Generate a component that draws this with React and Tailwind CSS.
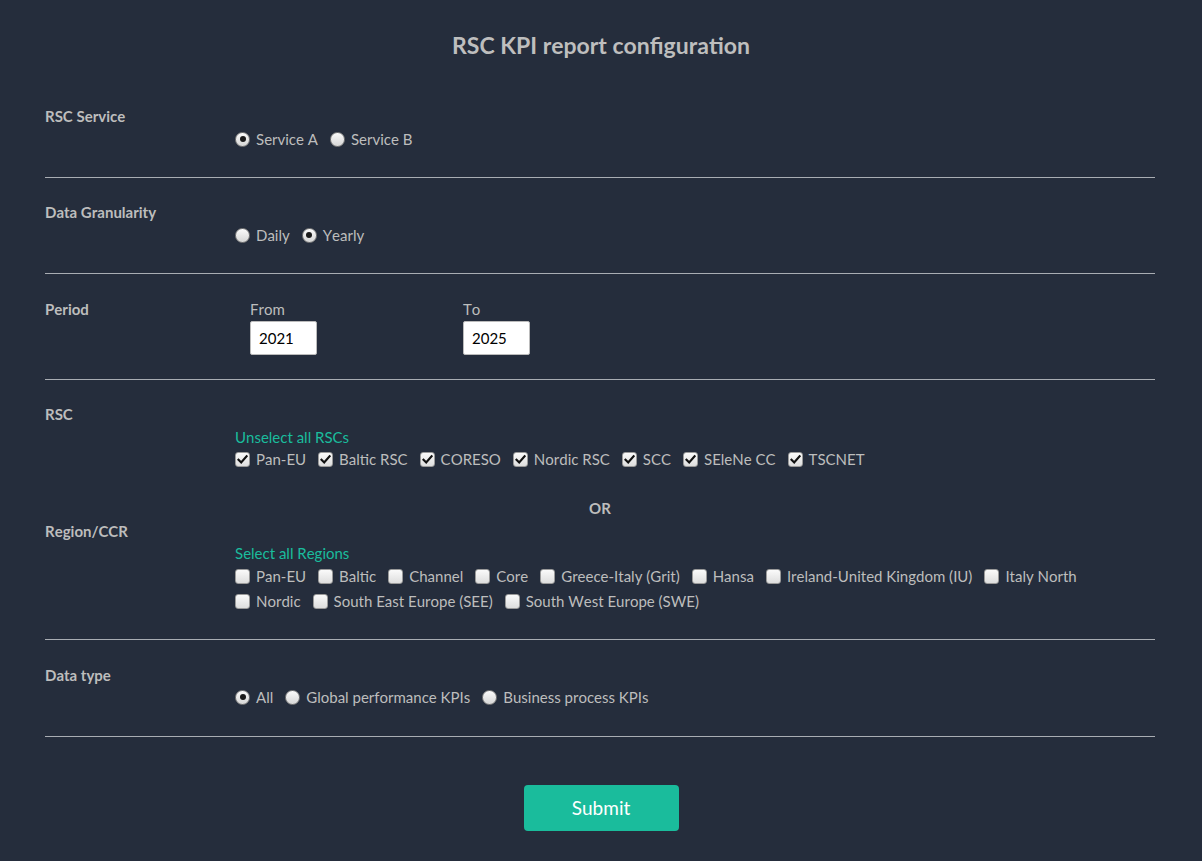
import React from "react";

function Radio({ checked, label }) {
  return (
    <label className="flex items-center mr-[12px]">
      <span className="w-[15px] h-[15px] rounded-full border border-[#7d7d7d] bg-gradient-to-b from-[#fbfbfb] to-[#d6d6d6] flex items-center justify-center shrink-0">
        {checked && <span className="w-[6px] h-[6px] rounded-full bg-[#1a1a1a]" />}
      </span>
      <span className="ml-[6px]">{label}</span>
    </label>
  );
}

function Check({ checked, label }) {
  return (
    <label className="flex items-center mr-[12px]">
      <span className="w-[15px] h-[15px] rounded-[3px] border border-[#9a9a9a] bg-gradient-to-b from-[#fafafa] to-[#dedede] flex items-center justify-center shrink-0">
        {checked && (
          <svg width="11" height="11" viewBox="0 0 11 11">
            <path d="M1.5 5.8 L4.2 8.5 L9.6 2.2" fill="none" stroke="#111" strokeWidth="2.2" strokeLinecap="square" />
          </svg>
        )}
      </span>
      <span className="ml-[6px] whitespace-nowrap">{label}</span>
    </label>
  );
}

function Label({ children }) {
  return <div className="w-[190px] shrink-0 font-bold h-[20px] leading-[20px]">{children}</div>;
}

export default function App() {
  const rscs = ["Pan-EU", "Baltic RSC", "CORESO", "Nordic RSC", "SCC", "SEleNe CC", "TSCNET"];
  const regions = [
    "Pan-EU",
    "Baltic",
    "Channel",
    "Core",
    "Greece-Italy (Grit)",
    "Hansa",
    "Ireland-United Kingdom (IU)",
    "Italy North",
    "Nordic",
    "South East Europe (SEE)",
    "South West Europe (SWE)",
  ];
  return (
    <div
      className="min-h-[861px] bg-[#252d3c] text-[#bdbdbd] text-[15px] leading-[20px] pl-[45px] pr-[47px] [font-kerning:none]"
      style={{ fontFamily: "Lato, 'Open Sans', sans-serif" }}
    >
      <h1 className="pt-[31px] h-[59px] text-center text-[23px] leading-[28px] font-bold text-[#bebebe] pl-[2px]">
        RSC KPI report configuration
      </h1>

      {/* RSC Service */}
      <div className="pt-[47px] pb-[28px] border-b border-[#a9adb3]">
        <Label>RSC Service</Label>
        <div className="ml-[190px] mt-[3px] flex">
          <Radio checked label="Service A" />
          <Radio label="Service B" />
        </div>
      </div>

      {/* Data Granularity */}
      <div className="pt-[24px] pb-[28px] border-b border-[#a9adb3]">
        <Label>Data Granularity</Label>
        <div className="ml-[190px] mt-[3px] flex">
          <Radio label="Daily" />
          <Radio checked label="Yearly" />
        </div>
      </div>

      {/* Period */}
      <div className="pt-[25px] pb-[24px] border-b border-[#a9adb3] flex">
        <Label>Period</Label>
        <div className="flex pl-[15px]">
          <div className="w-[213px]">
            <div className="h-[20px]">From</div>
            <div className="mt-[2px] w-[67px] h-[34px] bg-white border border-[#bbb] rounded-[2px] text-black pl-[8px] leading-[32px]">
              2021
            </div>
          </div>
          <div>
            <div className="h-[20px]">To</div>
            <div className="mt-[2px] w-[67px] h-[34px] bg-white border border-[#bbb] rounded-[2px] text-black pl-[8px] leading-[32px]">
              2025
            </div>
          </div>
        </div>
      </div>

      {/* RSC / Region */}
      <div className="pt-[24px] pb-[28px] border-b border-[#a9adb3]">
        <Label>RSC</Label>
        <div className="ml-[190px] mt-[3px]">
          <div className="text-[#1abc9c]">Unselect all RSCs</div>
          <div className="flex mt-[2px]">
            {rscs.map((r) => (
              <Check key={r} checked label={r} />
            ))}
          </div>
        </div>
        <div className="text-center font-bold mt-[29px]">OR</div>
        <div className="mt-[3px]">
          <Label>Region/CCR</Label>
        </div>
        <div className="ml-[190px] mt-[2px]">
          <div className="text-[#1abc9c]">Select all Regions</div>
          <div className="flex flex-wrap mt-[3px] gap-y-[5px]">
            {regions.map((r) => (
              <Check key={r} label={r} />
            ))}
          </div>
        </div>
      </div>

      {/* Data type */}
      <div className="pt-[25px] pb-[29px] border-b border-[#a9adb3]">
        <Label>Data type</Label>
        <div className="ml-[190px] mt-[2px] flex">
          <Radio checked label="All" />
          <Radio label="Global performance KPIs" />
          <Radio label="Business process KPIs" />
        </div>
      </div>

      <div className="flex justify-center pt-[48px] pl-[2px]">
        <button className="w-[155px] h-[46px] rounded-[4px] bg-[#1abc9c] text-white text-[19px]">Submit</button>
      </div>
    </div>
  );
}
